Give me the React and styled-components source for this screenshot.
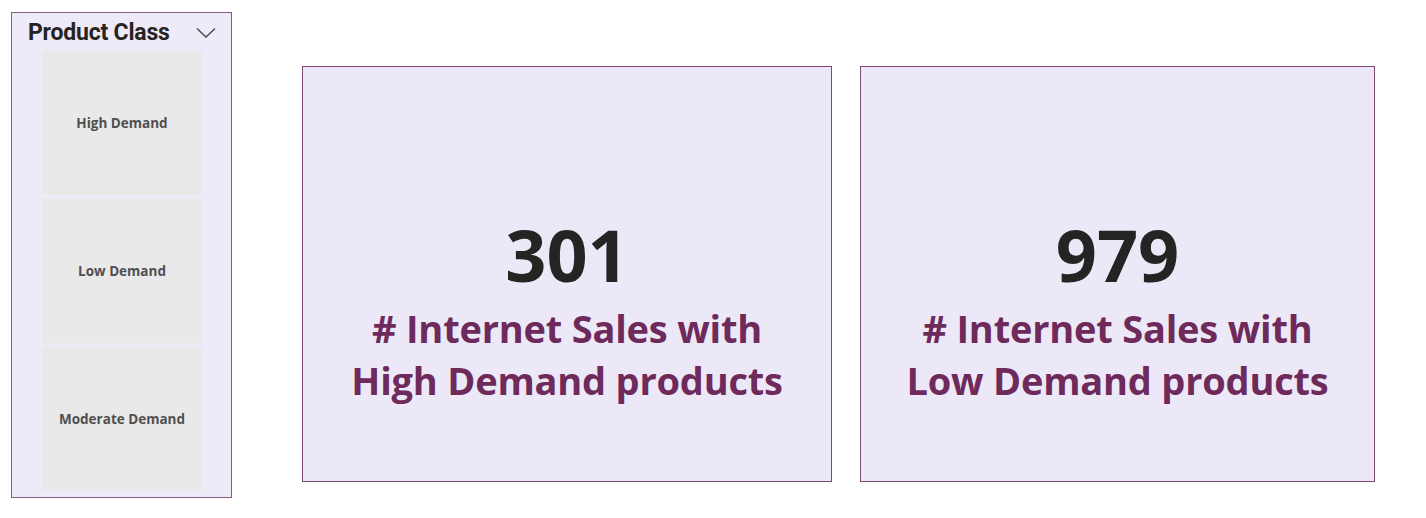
import React from 'react';
import styled, { createGlobalStyle } from 'styled-components';

const GlobalStyle = createGlobalStyle`
  html, body {
    margin: 0;
    padding: 0;
    background: #ffffff;
  }
`;

const classes = ['High Demand', 'Low Demand', 'Moderate Demand'];

const cards = [
  { value: '301', lines: ['# Internet Sales with', 'High Demand products'], width: 530 },
  { value: '979', lines: ['# Internet Sales with', 'Low Demand products'], width: 515 },
];

function Chevron() {
  return (
    <svg width="20" height="12" viewBox="0 0 20 12" fill="none">
      <polyline points="1,1.5 10,10 19,1.5" stroke="#444" strokeWidth="1.3" />
    </svg>
  );
}

function App() {
  return (
    <Page>
      <GlobalStyle />
      <Slicer>
        <SlicerHeader>
          <SlicerTitle>Product Class</SlicerTitle>
          <Chevron />
        </SlicerHeader>
        <TileList>
          {classes.map((c) => (
            <Tile key={c}>{c}</Tile>
          ))}
        </TileList>
      </Slicer>
      <CardRow>
        {cards.map((card) => (
          <Card key={card.value} $width={card.width}>
            <Value>{card.value}</Value>
            <Label>
              {card.lines.map((l) => (
                <div key={l}>{l}</div>
              ))}
            </Label>
          </Card>
        ))}
      </CardRow>
    </Page>
  );
}

const Page = styled.div`
  display: flex;
  align-items: flex-start;
  padding: 12px 0 0 11px;
  width: 1426px;
  height: 518px;
  box-sizing: border-box;
`;

const Slicer = styled.div`
  width: 221px;
  height: 486px;
  box-sizing: border-box;
  border: 1px solid #8a5b80;
  background: #efeaf8;
  display: flex;
  flex-direction: column;
`;

const SlicerHeader = styled.div`
  display: flex;
  align-items: center;
  justify-content: space-between;
  height: 37px;
  padding: 1px 15px 0 16px;
`;

const SlicerTitle = styled.span`
  font-family: Roboto, "Liberation Sans", sans-serif;
  font-weight: 700;
  font-size: 23px;
  letter-spacing: -0.2px;
  color: #252423;
`;

const TileList = styled.div`
  display: flex;
  flex-direction: column;
  gap: 4px;
  padding: 0 29px 0 30px;
`;

const Tile = styled.div`
  height: 144px;
  background: #e9e9e9;
  display: flex;
  align-items: center;
  justify-content: center;
  font-family: "Open Sans", "Noto Sans", sans-serif;
  font-weight: 700;
  font-size: 13.5px;
  color: #4f4f4f;
`;

const CardRow = styled.div`
  display: flex;
  gap: 28px;
  margin: 54px 0 0 70px;
`;

const Card = styled.div`
  width: ${(p) => p.$width}px;
  height: 416px;
  box-sizing: border-box;
  border: 1px solid #7d4a72;
  background: #ece8f7;
  display: flex;
  flex-direction: column;
  align-items: center;
  justify-content: center;
  padding-top: 72px;
  font-family: "Open Sans", "Noto Sans", sans-serif;
  font-weight: 700;
  text-align: center;
`;

const Value = styled.div`
  font-size: 72px;
  line-height: 80px;
  color: #252423;
`;

const Label = styled.div`
  font-size: 38px;
  line-height: 52px;
  letter-spacing: -0.2px;
  color: #6e2a5b;
  margin-top: 8px;
`;

export default App;
